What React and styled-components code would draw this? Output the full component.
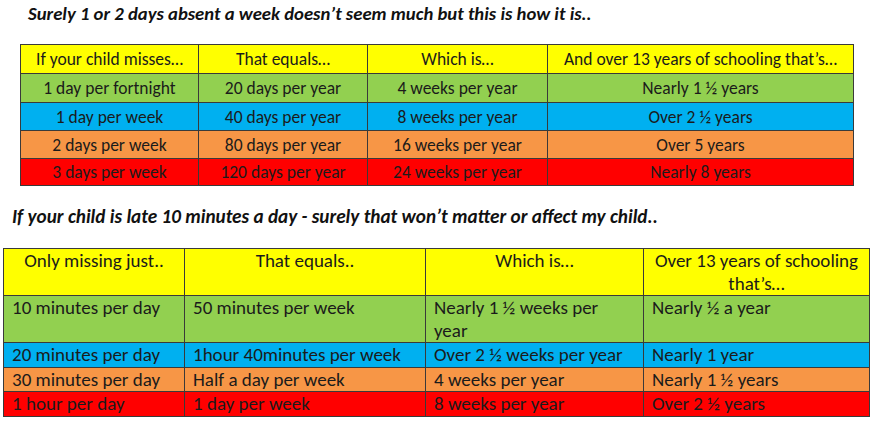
import React from 'react';
import styled, { createGlobalStyle } from 'styled-components';

const GlobalStyle = createGlobalStyle`
  body {
    margin: 0;
    background: #ffffff;
    font-family: Carlito, Lato, "Liberation Sans", sans-serif;
    color: #1b1b1b;
  }
`;

const Page = styled.div`
  width: 871px;
  height: 421px;
  overflow: hidden;
  display: flex;
  flex-direction: column;
`;

const Heading = styled.h2`
  margin: ${p => p.$top}px 0 0 ${p => p.$left}px;
  font-size: ${p => p.$size}px;
  line-height: 22px;
  font-weight: 700;
  font-style: italic;
  color: #111;
  white-space: nowrap;
`;

const Table = styled.table`
  border-collapse: collapse;
  table-layout: fixed;
  margin: ${p => p.$top}px 0 0 ${p => p.$left}px;
  width: ${p => p.$width}px;
`;

const Cell = styled.td`
  border: 1px solid #3a3a3a;
  background: ${p => p.$bg};
  height: ${p => p.$h}px;
  padding: 0 ${p => (p.$center ? 2 : 8)}px;
  text-align: ${p => (p.$center ? 'center' : 'left')};
  vertical-align: ${p => (p.$center ? 'middle' : 'top')};
  font-size: ${p => p.$size}px;
  line-height: ${p => p.$lh}px;
  color: #1b1b1b;
  white-space: ${p => (p.$center ? 'nowrap' : 'normal')};
`;

const colors = {
  head: '#ffff00',
  green: '#92d050',
  blue: '#00b0f0',
  orange: '#f79646',
  red: '#ff0000',
};

const absence = [
  { bg: colors.head, h: 28, cells: ['If your child misses…', 'That equals…', 'Which is…', 'And over 13 years of schooling that’s…'] },
  { bg: colors.green, h: 28, cells: ['1 day per fortnight', '20 days per year', '4 weeks per year', 'Nearly 1 ½ years'] },
  { bg: colors.blue, h: 27, cells: ['1 day per week', '40 days per year', '8 weeks per year', 'Over 2 ½ years'] },
  { bg: colors.orange, h: 27, cells: ['2 days per week', '80 days per year', '16 weeks per year', 'Over 5 years'] },
  { bg: colors.red, h: 26, cells: ['3 days per week', '120 days per year', '24 weeks per year', 'Nearly 8 years'] },
];

const late = [
  { bg: colors.head, h: 46, cells: ['Only missing just..', 'That equals..', 'Which is…', 'Over 13 years of schooling that’s…'], center: true },
  { bg: colors.green, h: 46, cells: ['10 minutes per day', '50 minutes per week', 'Nearly 1 ½ weeks per year', 'Nearly ½ a year'] },
  { bg: colors.blue, h: 24, cells: ['20 minutes per day', '1hour 40minutes per week', 'Over 2 ½ weeks per year', 'Nearly 1 year'] },
  { bg: colors.orange, h: 22, cells: ['30 minutes per day', 'Half a day per week', '4 weeks per year', 'Nearly 1 ½ years'] },
  { bg: colors.red, h: 24, cells: ['1 hour per day', '1 day per week', '8 weeks per year', 'Over 2 ½ years'] },
];

function GridTable({ rows, widths, top, left, center, size, lh }) {
  const total = widths.reduce((a, b) => a + b, 0);
  return (
    <Table $top={top} $left={left} $width={total}>
      <colgroup>
        {widths.map((w, i) => <col key={i} style={{ width: w }} />)}
      </colgroup>
      <tbody>
        {rows.map((r, i) => (
          <tr key={i}>
            {r.cells.map((c, j) => (
              <Cell
                key={j}
                $bg={r.bg}
                $h={r.h}
                $center={center}
                $size={size}
                $lh={lh}
                style={r.center && !center ? { textAlign: 'center' } : undefined}
              >
                {c}
              </Cell>
            ))}
          </tr>
        ))}
      </tbody>
    </Table>
  );
}

export default function App() {
  return (
    <Page>
      <GlobalStyle />
      <Heading $top={3} $left={28} $size={18.7}>
        Surely 1 or 2 days absent a week doesn’t seem much but this is how it is..
      </Heading>
      <GridTable
        rows={absence}
        widths={[178, 169, 180, 306]}
        top={19}
        left={20}
        center
        size={17.5}
        lh={20}
      />
      <Heading $top={20} $left={12} $size={19.2}>
        If your child is late 10 minutes a day - surely that won’t matter or affect my child..
      </Heading>
      <GridTable
        rows={late}
        widths={[181, 241, 218, 226]}
        top={20}
        left={3}
        size={19}
        lh={23}
      />
    </Page>
  );
}
